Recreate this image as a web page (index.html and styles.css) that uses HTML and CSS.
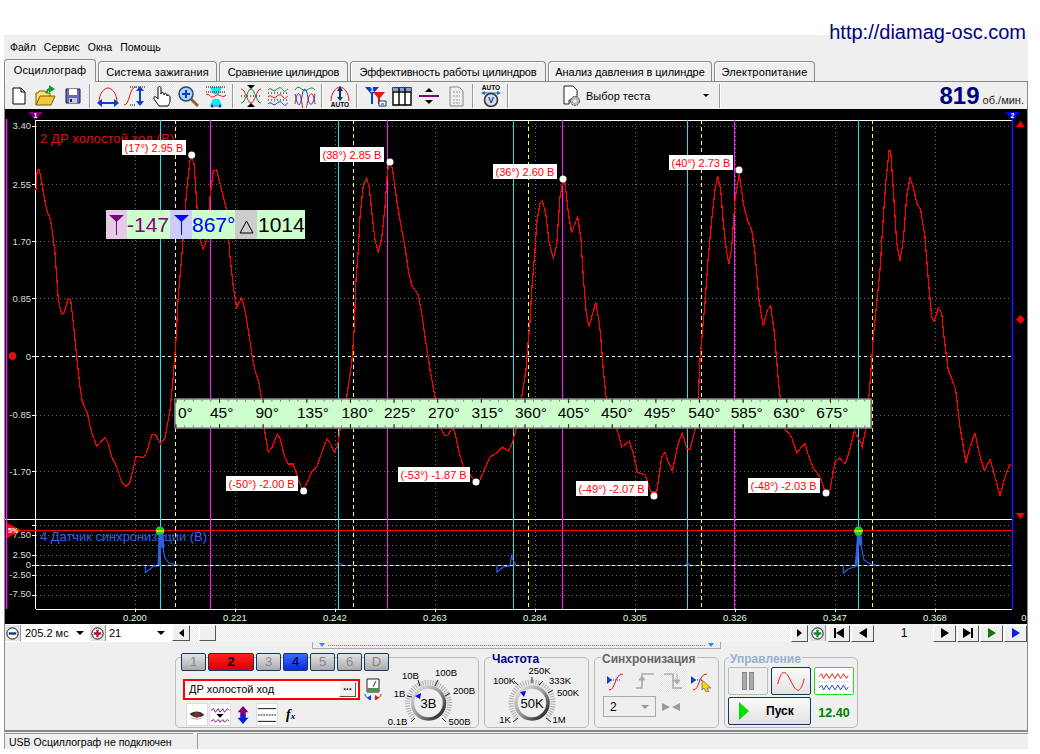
FILE: index.html
```html
<!DOCTYPE html>
<html lang="ru">
<head>
  <meta charset="UTF-8">
  <title>Осциллограф</title>
  <link rel="stylesheet" href="styles.css">
</head>
<body>

  <div class="site-link">http://diamag-osc.com</div>

  <div class="app">

    <!-- меню -->
    <div class="menu">
      <span>Файл</span><span>Сервис</span><span>Окна</span><span>Помощь</span>
    </div>

    <!-- вкладки -->
    <div class="tabs">
      <div class="tab active">Осциллограф</div>
      <div class="tab">Система зажигания</div>
      <div class="tab">Сравнение цилиндров</div>
      <div class="tab">Эффективность работы цилиндров</div>
      <div class="tab">Анализ давления в цилиндре</div>
      <div class="tab">Электропитание</div>
    </div>

    <div class="work">

      <!-- панель инструментов -->
      <div class="toolbar">
        <div class="tool"><svg viewBox="0 0 26 24"><path d="M7 4h8l4 4v12H7z" fill="#fff" stroke="#000"/><path d="M15 4v4h4" fill="none" stroke="#000"/></svg></div>
        <div class="tool"><svg viewBox="0 0 26 24"><path d="M3 21V9h2l1-2h6l1 2h4v3" fill="#ffe27a" stroke="#7a5a00"/><path d="M3 21l4-9h15l-4 9z" fill="#f5c542" stroke="#7a5a00"/><path d="M16 1l6 4-6 4z" fill="#0b9e2f"/><path d="M14 9c0-3 1-4 3-4" fill="none" stroke="#0b9e2f" stroke-width="2"/></svg></div>
        <div class="tool"><svg viewBox="0 0 26 24"><path d="M6 5h14v14H6z" fill="#6a6ab0" stroke="#1a1a50"/><path d="M9 5h8v6H9z" fill="#fff"/><path d="M9 14h8v5H9z" fill="#c8c8d8"/><path d="M10 15h2v3h-2z" fill="#1a1a50"/></svg></div>
        <div class="tool-sep"></div>
        <div class="tool"><svg viewBox="0 0 26 24"><path d="M4 18C4 10 9 4 13 4s9 6 9 14" fill="none" stroke="#e11"/><path d="M4 19h18" stroke="#0a3fd0" stroke-width="2"/><path d="M2 19l5-4v8zM24 19l-5-4v8z" fill="#0a3fd0"/></svg></div>
        <div class="tool"><svg viewBox="0 0 26 24"><path d="M8 3h16M8 21h6" stroke="#000" stroke-dasharray="1 1"/><path d="M2 21c6 0 5-18 12-18" fill="none" stroke="#e11"/><path d="M18 6v12" stroke="#0a3fd0" stroke-width="2"/><path d="M18 2l4 5h-8zM18 22l4-5h-8z" fill="#0a3fd0"/></svg></div>
        <div class="tool pressed"><svg viewBox="0 0 26 24"><path d="M10 22l-5-7c-1-2 1-3 2-2l2 2V4c0-2 3-2 3 0v6c0-2 3-2 3 0v1c0-2 3-2 3 0v1c0-2 3-1 3 1v4c0 2-1 3-2 5z" fill="#fff" stroke="#000"/></svg></div>
        <div class="tool"><svg viewBox="0 0 26 24"><path d="M15 15l7 7" stroke="#8a6a30" stroke-width="3"/><circle cx="10" cy="10" r="7" fill="#a8d4ff" stroke="#33466a" stroke-width="1.5"/><path d="M6 10h8M10 6v8" stroke="#0a3fd0" stroke-width="2"/></svg></div>
        <div class="tool"><svg viewBox="0 0 26 24"><path d="M7 3h12l-3 7H10zM10 15h6l3 6H7z" fill="#19e6e6"/><path d="M3 3h20M3 8h20" stroke="#000" stroke-dasharray="1 1"/><path d="M3 11c3-3 4 3 7 2s3-3 6-2 4 3 7 0" fill="none" stroke="#e11"/><path d="M8 22h10" stroke="#0a3fd0"/><path d="M7 22l3-2v4zM19 22l-3-2v4z" fill="#0a3fd0"/></svg></div>
        <div class="tool-sep"></div>
        <div class="tool"><svg viewBox="0 0 26 24"><path d="M3 5c5 0 6 14 10 14s5-14 10-14" fill="none" stroke="#e11"/><path d="M3 19c5 0 6-14 10-14s5 14 10 14" fill="none" stroke="#0a8a2a"/><path d="M3 12h20" stroke="#000" stroke-dasharray="1 2"/><path d="M9 1h8l-4 4zM9 23h8l-4-4z" fill="#000"/></svg></div>
        <div class="tool pressed"><svg viewBox="0 0 26 24"><path d="M3 6c3-4 5 3 8 0s5-3 7 0 3 0 5-1" fill="none" stroke="#0a8a2a"/><path d="M3 13c3-4 5 3 8 0s5-3 7 0 3 0 5-1" fill="none" stroke="#e11"/><path d="M3 20c3-4 5 3 8 0s5-3 7 0 3 0 5-1" fill="none" stroke="#0a3fd0"/><path d="M3 9h20M3 16h20" stroke="#000" stroke-dasharray="1 2"/></svg></div>
        <div class="tool"><svg viewBox="0 0 26 24"><path d="M3 6c3-5 5-2 8 0s6-2 8-2 3 1 4 2" fill="none" stroke="#0a8a2a"/><path d="M3 20c2-14 5-14 7 0s5 2 6-4 5-12 7 4" fill="none" stroke="#e11"/><path d="M3 10c3 14 5 14 7 2s5-6 6 2 5 10 7-4" fill="none" stroke="#0a3fd0"/></svg></div>
        <div class="tool-sep"></div>
        <div class="tool"><svg viewBox="0 0 26 24"><path d="M4 17C4 9 9 3 13 3s9 6 9 14" fill="none" stroke="#e11"/><path d="M13 6v9" stroke="#12307a" stroke-width="2"/><path d="M13 2l3 5h-6zM13 17l3-4h-6z" fill="#12307a"/><text class="tool-auto" x="13" y="23">AUTO</text></svg></div>
        <div class="tool-sep"></div>
        <div class="tool"><svg viewBox="0 0 26 24"><path d="M3 3h14l-6 7v10h-2V10z" fill="#0a3fd0"/><path d="M11 8h12l-5 6v6h-2v-6z" fill="#e11"/><text class="tool-num" x="10" y="8">1</text><path d="M17 17h7v5h-7z" fill="#fff" stroke="#12307a"/><path d="M19 20h3" stroke="#12307a"/></svg></div>
        <div class="tool pressed"><svg viewBox="0 0 26 24"><path d="M4 4h18v17H4z" fill="#fff" stroke="#000" stroke-width="1.4"/><path d="M4 4h18v3H4z" fill="#7f9fd8"/><path d="M4 8h18M10 4v17M16 4v17" stroke="#000" stroke-width="1.4"/></svg></div>
        <div class="tool"><svg viewBox="0 0 26 24"><path d="M3 12h20" stroke="#800080" stroke-width="2"/><path d="M13 4l4 4H9zM13 20l4-4H9z" fill="#000"/></svg></div>
        <div class="tool"><svg viewBox="0 0 26 24"><path d="M7 3h9l4 4v15H7z" fill="#eee" stroke="#888"/><path d="M10 8h7M10 12h7M10 16h7M10 19h7" stroke="#999" stroke-dasharray="2 1"/></svg></div>
        <div class="tool-sep"></div>
        <div class="tool"><svg viewBox="0 0 26 24"><text class="tool-auto" x="13" y="6">AUTO</text><path d="M5 9h16" stroke="#0a6fd0"/><path d="M3 9l4-2v4zM23 9l-4-2v4z" fill="#0a6fd0"/><circle cx="13" cy="16" r="6.5" fill="#ddd" stroke="#333" stroke-width="1.6"/><text class="tool-v" x="13" y="19">V</text></svg></div>
        <div class="tool-sep"></div>

        <div class="test-select">
          <svg class="test-icon" viewBox="0 0 22 24"><path d="M3 2h9l4 4v10H8v4H3z" fill="#fff" stroke="#222"/><circle cx="14" cy="17" r="4.5" fill="#bbb" stroke="#333" stroke-dasharray="2 1"/><circle cx="14" cy="17" r="1.6" fill="#fff"/></svg>
          <span>Выбор теста</span>
          <i class="caret small"></i>
        </div>
        <div class="tool-sep"></div>

        <div class="rpm"><b>819</b> об./мин.</div>
      </div>

      <!-- экран осциллографа -->
      <svg class="scope" viewBox="5 109 1022 515" width="1022" height="515">
        <rect x="5" y="109" width="1022" height="515" fill="#000"/>

        <path class="grid" d="M36 126.5H1012M36 184.5H1012M36 241.5H1012M36 298.5H1012M36 415.5H1012M36 471.5H1012M36 525.5H1012M36 535.5H1012M36 545.5H1012M36 555.5H1012M36 575.5H1012M36 585.5H1012M36 595.5H1012"/>
        <path class="grid" d="M135.5 120V609M235.5 120V609M335.5 120V609M435.5 120V609M535.5 120V609M635.5 120V609M735.5 120V609M835.5 120V609M935.5 120V609"/>

        <!-- оси -->
        <path class="axis" d="M35.5 120V609M35.5 120.5H1012M5 519.5H1012M35.5 609.5H1012"/>
        <path class="axis" d="M32 126.5h3M32 184.5h3M32 241.5h3M32 298.5h3M32 356.5h3M32 415.5h3M32 471.5h3M32 525.5h3M32 535.5h3M32 555.5h3M32 565.5h3M32 575.5h3M32 595.5h3M135.5 609v3M235.5 609v3M335.5 609v3M435.5 609v3M535.5 609v3M635.5 609v3M735.5 609v3M835.5 609v3M935.5 609v3"/>
        <path class="zero" d="M36 356.5H1012"/>

        <!-- курсоры -->
        <path class="line-cyan" d="M160.5 120V609M338.5 120V609M513.5 120V609M687.5 120V609M858.5 120V609"/>
        <path class="line-yellow" d="M175.5 120V609M353.5 120V609M528.5 120V609M701.5 120V609M872.5 120V609"/>
        <path class="line-magenta" d="M210.5 120V609M387.5 120V609M562.5 120V609M734.5 120V609"/>
        <path class="line-left" d="M6.5 119V609"/>
        <path class="line-right" d="M1012.5 112V609"/>

        <polyline class="wave" points="36,190 37,172 39,169 41,178 43,190 46.7,210 50,218 51.7,227 55,253 58.3,300 61.7,314 64,312.7 68.3,298.7 70.7,300 73.3,323 75,340 76.7,357 80,387 82.3,402 87.3,413 91.7,433 96.7,446 100,443 105,437 108,443 111.7,457 116.7,467 121.7,482 126,487 130,482 135.7,458 138,456 143,458 146.7,453 151.7,435 155,434 160.7,444 165,438 170,410 173,380 176,340 178,300 181.7,257 186.7,190 190,160 191.7,158 194,163 196.7,203 200,240 203.3,249 206.7,240 210,197 213.3,171 216.7,170 221.7,190 226.7,210 230,257 233.3,287 236.7,307 241.7,298 245,310 248.3,330 252.3,357 255,370 259,383 261.7,400 265,433 268.3,452 271.7,448 277.3,434 280,438 285,458 288.3,464 293.3,464 298.3,480 303.3,491 311.7,472 316.7,467 321.7,453 326.7,439 330,443 334.3,452 337.3,447 340,430 346.7,397 351.7,363 352.7,352 354.3,327 356,280 358.3,250 360,217 363.3,185 366.7,178 369.3,188 372.3,217 375,240 378.3,253 381.7,238 385,207 387.3,173 389.3,163 392.3,168 396.7,200 401.7,230 405,247 408.3,270 411.7,285 418.3,295 421.7,313 425,337 428.3,358 430,370 435,397 440,427 445,436 448,435 452.7,427 455,433 459.3,453 463.3,467 468.3,472 475,482 480,480 490,457 496.7,453 502.3,447 508.3,451 511.7,445 516.7,427 521.7,397 526,370 528.3,340 530,322 531.7,290 535,250 536.7,223 540,203 542.3,201 545.7,213 549,242 553.3,258 556.7,245 560,197 562.7,182 565,183 568.3,213 571.7,233 574.3,225 577.7,217 581,240 583.3,277 586,310 588.7,327 591.7,317 595.7,302 599.3,323 601,340 603.3,370 606,397 616.7,428 621.7,447 629.3,441 633.3,453 637.3,472 645,475 651,492 656.7,492 661.7,457 665,452 668.3,462 672.3,471 678.3,443 682.3,433 686.7,448 690,450 695,430 698.3,397 700,360 701.7,340 705,303 708.3,257 711.7,220 715,190 717.7,176 720.7,190 723.3,223 726.7,253 729,264 731.7,247 735,200 739.3,174 743.3,203 746.7,218 751.7,230 755,253 759,300 763.3,326 767.3,310 770.7,306 774,330 775,340 778.3,380 783.3,427 791.7,437 796.7,453 805,443 808.3,455 813.3,468 820,477 825.7,493 830,490 835,462 839.3,458 845,464 848.3,455 854.3,431 858.3,438 862.3,447 866.7,423 870,383 871,370 873.3,337 876.7,303 880,270 883.3,217 886,180 889,151 890.7,151 893.3,190 896.7,243 900,261 903.3,240 906.7,197 910,177 913.3,187 916.7,203 920.7,210 925,237 928.3,280 931.7,317 934,322 938.3,308 941.7,313 944.3,340 948.3,370 952.3,380 955.7,390 960,427 966,463 970,447 975,433 979.3,453 984.3,471 990,459 995,477 1000,496 1005,477 1010,464 1012,466"/>

        <!-- канал 4 -->
        <path class="sync" d="M36 565.5H1012"/>
        <polyline class="sync" points="145.3,565 145.3,572.5 150,569 153,566.5 159,566"/>
        <polyline class="sync spike" points="159,566 159.5,550 160,535 162,535 163,548"/>
        <polyline class="sync" points="163,548 165,558 169,563 175,564.7 179,565"/>
        <polyline class="sync" points="338,565 339,563 341,564 343,566"/>
        <polyline class="sync" points="497,565 497,572 503,567 510,566 511.5,556 513,560 516,565 520,566"/>
        <polyline class="sync" points="686,565 687,563 689,564 691,566"/>
        <polyline class="sync" points="843.3,565 843.3,573 848,569 856,566.5"/>
        <polyline class="sync spike" points="856,566.5 857.5,550 858.5,535 860,535 861,545"/>
        <polyline class="sync" points="861,545 864,560 870,564 876,565"/>
        <path class="zero" d="M36 565.5H1012"/>

        <path class="trig" d="M8 530.5H1012"/>
        <circle cx="160" cy="531" r="4.5" fill="#19d219"/>
        <circle cx="858.5" cy="531" r="4.5" fill="#19d219"/>
        <path class="trig-mid" d="M156 531h8M854.5 531h8"/>

        <!-- подписи каналов -->
        <text class="title-red" x="40" y="143" textLength="134">2 ДР холостой ход (В)</text>
        <text class="title-blue" x="40" y="541" textLength="167">4 Датчик синхронизации (В)</text>

        <!-- шкала напряжения -->
        <g class="ax-y">
          <text x="31" y="129">3.40</text>
          <text x="31" y="188">2.55</text>
          <text x="31" y="245">1.70</text>
          <text x="31" y="302">0.85</text>
          <text x="31" y="360">0</text>
          <text x="31" y="418">-0.85</text>
          <text x="31" y="475">-1.70</text>
          <text x="31" y="538">7.50</text>
          <text x="31" y="558">2.50</text>
          <text x="31" y="568">0</text>
          <text x="31" y="578">-2.50</text>
          <text x="31" y="597">-7.50</text>
        </g>

        <!-- шкала времени -->
        <g class="ax-x">
          <text x="135" y="621">0.200</text>
          <text x="235" y="621">0.221</text>
          <text x="335" y="621">0.242</text>
          <text x="435" y="621">0.263</text>
          <text x="535" y="621">0.284</text>
          <text x="635" y="621">0.305</text>
          <text x="735" y="621">0.326</text>
          <text x="835" y="621">0.347</text>
          <text x="935" y="621">0.368</text>
          <text x="1024" y="621">0</text>
        </g>

        <!-- маркеры -->
        <path d="M28 112h15l-7.5 8z" fill="#800080"/>
        <text class="mark" x="35.5" y="117.5">1</text>
        <path d="M1005 112h15l-7.5 8z" fill="#00f"/>
        <text class="mark" x="1012.5" y="117.5">2</text>
        <path d="M1016 127h9l-4.5-6z" fill="#f00"/>
        <path d="M1016 513h9l-4.5 6z" fill="#f00"/>
        <path d="M1020.5 315l4.5 4.5-4.5 4.5-4.5-4.5z" fill="#f00"/>
        <circle cx="12.5" cy="356" r="3.5" fill="#f00" stroke="#a33"/>
        <path d="M7 523l15 7.5-15 7.5z" fill="#f00"/>
        <text class="mark-left" x="8" y="533">5%</text>

        <!-- подписи экстремумов -->
        <g class="note">
          <rect x="122" y="140" width="64" height="15"/><text x="124.5" y="151.5">(17°) 2.95 В</text>
          <rect x="320" y="147" width="64" height="15"/><text x="322.5" y="158.5">(38°) 2.85 В</text>
          <rect x="493" y="164" width="64" height="15"/><text x="495.5" y="175.5">(36°) 2.60 В</text>
          <rect x="669" y="155" width="64" height="15"/><text x="671.5" y="166.5">(40°) 2.73 В</text>
          <rect x="226" y="476" width="72" height="15"/><text x="228.5" y="487.5">(-50°) -2.00 В</text>
          <rect x="398" y="467" width="72" height="15"/><text x="400.5" y="478.5">(-53°) -1.87 В</text>
          <rect x="576" y="481" width="72" height="15"/><text x="578.5" y="492.5">(-49°) -2.07 В</text>
          <rect x="748" y="478" width="72" height="15"/><text x="750.5" y="489.5">(-48°) -2.03 В</text>
        </g>
        <g fill="#fff">
          <circle cx="191.7" cy="155" r="3.5"/>
          <circle cx="390" cy="162" r="3.5"/>
          <circle cx="563" cy="179" r="3.5"/>
          <circle cx="739" cy="170" r="3.5"/>
          <circle cx="303.7" cy="491" r="3.5"/>
          <circle cx="476" cy="482" r="3.5"/>
          <circle cx="654" cy="496" r="3.5"/>
          <circle cx="826" cy="493" r="3.5"/>
        </g>

        <!-- значения курсоров -->
        <rect x="106" y="210" width="199" height="29" fill="#ccffcc"/>
        <rect x="106" y="210" width="21" height="29" fill="#e4cce4"/>
        <rect x="170" y="210" width="22" height="29" fill="#ccccff"/>
        <rect x="235" y="210" width="22" height="29" fill="#cccccc"/>
        <path d="M109 215h15l-7.5 7z" fill="#800080"/><path d="M116.5 220v15" stroke="#800080"/>
        <path d="M174 215h15l-7.5 7z" fill="#00f"/><path d="M181.5 220v15" stroke="#00f"/>
        <path d="M240 233h13l-6.5-12z" fill="none" stroke="#000"/>
        <text class="cur cur-p" x="127" y="232">-147</text>
        <text class="cur cur-b" x="192" y="232">867°</text>
        <text class="cur" x="258" y="232">1014</text>

        <!-- шкала градусов -->
        <rect class="ruler" x="175" y="399" width="696" height="29"/>
        <path class="ruler-minor" d="M175.4 400.5H870M175.4 426.5H870"/>
        <path class="ruler-major" d="M175.4 401H870M175.4 426H870"/>
        <g class="deg">
          <text x="178" y="418">0°</text>
          <text x="210" y="418">45°</text>
          <text x="255.5" y="418">90°</text>
          <text x="297" y="418">135°</text>
          <text x="341.5" y="418">180°</text>
          <text x="384" y="418">225°</text>
          <text x="428" y="418">270°</text>
          <text x="471.5" y="418">315°</text>
          <text x="515" y="418">360°</text>
          <text x="557.7" y="418">405°</text>
          <text x="601" y="418">450°</text>
          <text x="644" y="418">495°</text>
          <text x="688.3" y="418">540°</text>
          <text x="730.7" y="418">585°</text>
          <text x="773.3" y="418">630°</text>
          <text x="816.3" y="418">675°</text>
        </g>
      </svg>

      <!-- развертка и прокрутка -->
      <div class="strip">
        <div class="span-box">
          <div class="round-btn"><svg viewBox="0 0 16 16"><circle cx="8" cy="8" r="6" fill="#fff" stroke="#000"/><path d="M4 8h8" stroke="#12307a" stroke-width="2.5"/></svg></div>
          <span class="span-val">205.2 мс</span>
          <i class="caret"></i>
          <div class="round-btn"><svg viewBox="0 0 16 16"><circle cx="8" cy="8" r="6" fill="#fff" stroke="#000"/><path d="M4 8h8M8 4v8" stroke="#b01030" stroke-width="2.5"/></svg></div>
          <span class="span-num">21</span>
          <i class="caret"></i>
        </div>
        <button class="bevel step-l"><i class="tri-l"></i></button>
        <div class="thumb bevel"></div>
        <div class="track"></div>
        <button class="bevel nav-s"><i class="tri-r"></i></button>
        <div class="round-btn nav-plus"><svg viewBox="0 0 16 16"><circle cx="8" cy="8" r="6" fill="#fff" stroke="#000"/><path d="M4 8h8M8 4v8" stroke="#0a8a2a" stroke-width="2.5"/></svg></div>
        <button class="bevel nav-b"><i class="bar-l"></i><i class="tri-l"></i></button>
        <button class="bevel nav-b wide"><i class="tri-l"></i></button>
        <div class="page-num">1</div>
        <button class="bevel nav-b wide"><i class="tri-r"></i></button>
        <button class="bevel nav-b"><i class="tri-r"></i><i class="bar-r"></i></button>
        <button class="bevel nav-b wide green"><i class="tri-r"></i></button>
        <button class="bevel nav-b wide blue"><i class="tri-r"></i></button>
      </div>

      <div class="collapse"><i class="mini-down"></i><span></span><i class="mini-down"></i></div>

      <!-- нижняя панель -->
      <div class="panel">

        <div class="group group-ch">
          <div class="ch-col">
            <div class="ch-row">
              <div class="ch">1</div>
              <div class="ch ch-red">2</div>
              <div class="ch">3</div>
              <div class="ch ch-blue">4</div>
              <div class="ch">5</div>
              <div class="ch">6</div>
              <div class="ch">D</div>
            </div>
            <div class="name-row">
              <div class="name-box">
                <span>ДР холостой ход</span>
                <button class="bevel dots">...</button>
              </div>
              <svg class="meter" viewBox="0 0 20 22"><path d="M4 1h12v13H4z" fill="#fff" stroke="#222"/><path d="M4 10h12v4H4z" fill="#5a8a5a"/><path d="M10 9l3-6" stroke="#333"/><path d="M2 16c0 3 2 4 6 4" fill="none" stroke="#0a3fd0"/><path d="M18 16c0 3-2 4-6 4" fill="none" stroke="#e11"/><path d="M8 17v6l-4-3z" fill="#0a3fd0"/><path d="M12 17v6l4-3z" fill="#e11"/></svg>
            </div>
            <div class="tool-row">
              <div class="mini"><svg viewBox="0 0 22 22"><path d="M3 10c4-4 12-4 16 1-4 3-12 4-16-1z" fill="#333"/><circle cx="11" cy="11" r="3" fill="#8a2a2a"/><path d="M4 14c4 2 10 2 13 0" fill="none" stroke="#aaa"/></svg></div>
              <div class="mini"><svg viewBox="0 0 22 22"><path d="M1 6l3-2 2 4 3-4 2 4 3-4 2 4 3-4 2 2M1 18l3-2 2 3 3-3 2 3 3-3 2 3 3-3 2 2" fill="none" stroke="#800080"/><path d="M7 10h8l-4 4z" fill="#000"/></svg></div>
              <div class="mini plain"><svg viewBox="0 0 22 22"><path d="M11 1l6 7h-3v4H8V8H5z" fill="#800080"/><path d="M11 21l6-7h-3v-3H8v3H5z" fill="#0a1fe0"/></svg></div>
              <div class="mini"><svg viewBox="0 0 22 22"><path d="M1 4h20M1 18h20" stroke="#000"/><path d="M1 11h20" stroke="#000" stroke-dasharray="2 1"/></svg></div>
              <span class="fx">f<small>x</small></span>
            </div>
          </div>
          <svg class="dial" viewBox="0 0 90 69" width="90" height="69">
            <defs>
              <linearGradient id="ring" x1="0" y1="0" x2="1" y2="1">
                <stop offset="0" stop-color="#e8e8e8"/>
                <stop offset=".5" stop-color="#999"/>
                <stop offset="1" stop-color="#111"/>
              </linearGradient>
            </defs>
            <path class="dial-ticks" d="M27.2 59.8A21 21 0 1 1 57.8 59.8"/>
            <circle cx="42.5" cy="45" r="16" fill="#efefef" stroke="url(#ring)" stroke-width="3.5"/>
            <path class="dial-major" d="M29 60l-4 4M56 60l4 4M26 39l-5-1M59 38l5-3M34 28l-2-6M49 28l3-6"/>
            <path d="M35 35l-6 3 5 3z" fill="#00f"/>
            <text class="dial-val" x="42.5" y="50">3В</text>
            <g class="dial-txt">
              <text x="24.5" y="20.5">10В</text>
              <text x="60" y="17.5">100В</text>
              <text x="13.5" y="38.5">1В</text>
              <text x="78" y="35.5">200В</text>
              <text x="11.5" y="66.5">0.1В</text>
              <text x="73.5" y="66.5">500В</text>
            </g>
          </svg>
        </div>

        <div class="group group-freq">
          <div class="group-title t-navy">Частота</div>
          <svg class="dial" viewBox="0 0 103 69" width="103" height="69">
            <path class="dial-ticks" d="M32.1 59.8A21 21 0 1 1 61.9 59.8"/>
            <circle cx="47" cy="45" r="16" fill="#efefef" stroke="url(#ring)" stroke-width="3.5"/>
            <path class="dial-major" d="M33 60l-5 4M61 60l5 4M63 35l5-3M54 27l4-4M47 25v-6M33 27l-4-4"/>
            <path d="M41 33l-6 1 4 5z" fill="#00f"/>
            <text class="dial-val" x="47" y="50">50K</text>
            <g class="dial-txt">
              <text x="54.5" y="16">250K</text>
              <text x="19" y="26">100K</text>
              <text x="75" y="26">333K</text>
              <text x="83" y="38">500K</text>
              <text x="20" y="65">1K</text>
              <text x="74" y="65">1M</text>
            </g>
          </svg>
        </div>

        <div class="group group-sync">
          <div class="group-title t-gray">Синхронизация</div>
          <div class="sync-icons">
            <div class="s-btn"><svg viewBox="0 0 24 22"><path d="M4 20c7 0 5-16 14-16" fill="none" stroke="#e11"/><path d="M4 10h12" stroke="#0a3fd0" stroke-dasharray="1 1"/><path d="M2 6l5 4-5 4z" fill="#0a3fd0"/></svg></div>
            <div class="s-btn"><svg viewBox="0 0 24 22"><path d="M3 18h6V4h12" fill="none" stroke="#aaa" stroke-width="1.5"/><path d="M9 6l3 4H6zM9 10v7" stroke="#aaa" fill="#aaa"/></svg></div>
            <div class="s-btn pressed"><svg viewBox="0 0 24 22"><path d="M3 4h9v14h9" fill="none" stroke="#aaa" stroke-width="1.5"/><path d="M16 14l3-4h-6zM16 4v7" stroke="#aaa" fill="#aaa"/></svg></div>
            <div class="s-btn"><svg viewBox="0 0 24 22"><path d="M4 20c7 0 5-16 14-16" fill="none" stroke="#e11"/><path d="M4 10h10" stroke="#0a3fd0" stroke-dasharray="1 1"/><path d="M2 6l5 4-5 4z" fill="#0a3fd0"/><path d="M13 10l9 8-4 0 2 4-3 0-2-4-2 2z" fill="#ffdc00" stroke="#444" stroke-width=".6"/></svg></div>
          </div>
          <div class="sync-row">
            <div class="sync-combo"><span>2</span><i class="caret gray"></i></div>
            <svg class="sync-arrows" viewBox="0 0 20 10"><path d="M1 1l8 4-8 4zM19 1l-8 4 8 4z" fill="#999"/></svg>
          </div>
        </div>

        <div class="group group-ctl">
          <div class="group-title t-blue">Управление</div>
          <div class="ctl-grid">
            <div class="ctl pause"><i></i><i></i></div>
            <div class="ctl on"><svg viewBox="0 0 40 28"><path d="M6 17C10 1 14 1 20 14s10 13 14 -3" fill="none" stroke="#e11"/></svg></div>
            <div class="ctl live"><svg viewBox="0 0 40 28"><path d="M4 9l3-3 2 5 3-5 3 5 3-5 3 5 3-5 3 5 3-5 3 5 2-3" fill="none" stroke="#e11"/><path d="M4 21l3-3 2 5 3-5 3 5 3-5 3 5 3-5 3 5 3-5 3 5 2-3" fill="none" stroke="#0a3fd0"/><path d="M4 14.5h32" stroke="#999" stroke-dasharray="1 2"/></svg></div>
            <div class="ctl on start"><svg viewBox="0 0 12 18" width="12" height="18"><path d="M1 0l10 9-10 9z" fill="#00e000"/></svg><b>Пуск</b></div>
            <div class="volt">12.40</div>
          </div>
        </div>

      </div>
    </div>

    <!-- строка состояния -->
    <div class="status">
      <div class="status-left">USB Осциллограф не подключен</div>
      <div class="status-right"></div>
    </div>
  </div>

</body>
</html>
```

FILE: styles.css
```css
*{
  box-sizing: border-box;
}

body{
  margin: 0;
  background: #fff;
  font-family: "Liberation Sans", Arial, sans-serif;
  color: #000;
  height: 754px;
  overflow: hidden;
}

button{
  font-family: inherit;
  padding: 0;
}

.site-link{
  height: 35px;
  padding: 22px 14px 0 0;
  text-align: right;
  font-size: 20px;
  line-height: 20px;
  color: #000080;
}

.app{
  margin-left: 4px;
  width: 1024px;
  height: 714px;
  background: #efefef;
}

/* меню */
.menu{
  height: 24px;
  display: flex;
  align-items: center;
  padding-left: 6px;
  font-size: 10.5px;
}

.menu span{
  margin-right: 8px;
}

/* вкладки */
.tabs{
  height: 22px;
  display: flex;
  align-items: flex-end;
  gap: 2px;
}

.tab{
  width: 119px;
  height: 20px;
  border: 1px solid #888;
  border-bottom: 0;
  border-radius: 4px 4px 0 0;
  font-size: 11px;
  line-height: 20px;
  letter-spacing: .15px;
  text-align: center;
  white-space: nowrap;
  box-shadow: inset 1px 1px 0 #fff;
}

.tab:nth-child(3){
  width: 129px;
  letter-spacing: -.2px;
}

.tab:nth-child(4){
  width: 196px;
  letter-spacing: -.15px;
}

.tab:nth-child(5){
  width: 164px;
  letter-spacing: -.05px;
}

.tab:nth-child(6){
  width: 101px;
}

.tab.active{
  width: 92px;
  height: 23px;
  margin-bottom: -1px;
  position: relative;
  background: #efefef;
  line-height: 20px;
  z-index: 1;
}

.work{
  border: 1px solid #888;
  border-bottom-width: 2px;
  height: 651px;
  background: #efefef;
}

/* панель инструментов */
.toolbar{
  height: 27px;
  display: flex;
  align-items: center;
}

.tool{
  width: 27px;
  height: 25px;
  display: flex;
  align-items: center;
  justify-content: center;
}

.tool svg{
  width: 26px;
  height: 24px;
  display: block;
}

.tool.pressed,
.s-btn.pressed{
  background: repeating-conic-gradient(#fff 0 25%, #dedede 0 50%) 0 0 / 2px 2px;
}

.tool-sep{
  width: 2px;
  height: 24px;
  margin: 0 3px;
  border-left: 1px solid #999;
  border-right: 1px solid #fff;
}

.tool-auto{
  font-size: 6.5px;
  font-weight: bold;
  text-anchor: middle;
  fill: #000;
}

.tool-num{
  font-size: 7px;
  font-weight: bold;
  text-anchor: middle;
  fill: #fff;
}

.tool-v{
  font-size: 9px;
  font-weight: bold;
  text-anchor: middle;
  fill: #0a3fd0;
}

.test-select{
  width: 204px;
  display: flex;
  align-items: center;
  padding-left: 49px;
  font-size: 11px;
}

.test-icon{
  width: 22px;
  height: 24px;
  margin-right: 3px;
}

.test-select span{
  flex: 1;
}

.test-select .caret{
  margin-right: 7px;
}

.caret{
  display: inline-block;
  width: 0;
  height: 0;
  border-top: 4px solid #000;
  border-left: 4px solid transparent;
  border-right: 4px solid transparent;
}

.caret.small{
  border-top-width: 3px;
  border-left-width: 3px;
  border-right-width: 3px;
}

.caret.gray{
  border-top-color: #999;
}

.rpm{
  margin-left: auto;
  padding-right: 3px;
  font-size: 11px;
  color: #222;
  white-space: nowrap;
}

.rpm b{
  font-size: 24px;
  color: #000080;
}

/* экран */
.scope{
  display: block;
}

.scope text{
  font-family: "Liberation Sans", Arial, sans-serif;
}

.grid{
  fill: none;
  stroke: #6a6a6a;
  stroke-dasharray: 1 3;
}

.axis{
  fill: none;
  stroke: #fff;
  shape-rendering: crispEdges;
}

.zero{
  fill: none;
  stroke: #fff;
  stroke-dasharray: 3 3;
  shape-rendering: crispEdges;
}

.line-cyan{
  stroke: #19e6e6;
  shape-rendering: crispEdges;
}

.line-yellow{
  stroke: #ffff33;
  stroke-dasharray: 4 3;
  shape-rendering: crispEdges;
}

.line-magenta{
  stroke: #ff19ff;
  shape-rendering: crispEdges;
}

.line-left{
  stroke: #ff19ff;
  stroke-width: 1.5;
}

.line-right{
  stroke: #1a1aff;
  stroke-width: 1.5;
}

.wave{
  fill: none;
  stroke: #f00;
  stroke-width: 1.2;
  shape-rendering: crispEdges;
}

.sync{
  fill: none;
  stroke: #2f62e8;
  stroke-width: 1.2;
}

.sync.spike{
  stroke-width: 3;
}

.trig{
  stroke: #f00;
  stroke-width: 1.5;
  shape-rendering: crispEdges;
}

.trig-mid{
  stroke: #ffe100;
  stroke-width: 1.5;
}

.title-red,
.title-blue{
  font-size: 13px;
}

.title-red{
  fill: #e01010;
}

.title-blue{
  fill: #2f62e8;
}

.ax-y text{
  font-size: 9.5px;
  fill: #ddd;
  text-anchor: end;
}

.ax-x text{
  font-size: 9.5px;
  fill: #dfd;
  text-anchor: middle;
}

.mark{
  font-size: 7px;
  font-weight: bold;
  fill: #fff;
  text-anchor: middle;
}

.mark-left{
  font-size: 7px;
  font-weight: bold;
  fill: #fff;
}

.note rect{
  fill: #fff;
}

.note text{
  font-size: 11px;
  fill: #f00;
}

.cur{
  font-size: 21px;
  fill: #000;
}

.cur-p{
  fill: #800080;
}

.cur-b{
  fill: #00f;
}

.ruler{
  fill: #ccffcc;
  stroke: #888;
  stroke-width: 1.5;
}

.ruler-minor{
  fill: none;
  stroke: #777;
  stroke-width: 2;
  stroke-dasharray: 1 7.72;
}

.ruler-major{
  fill: none;
  stroke: #222;
  stroke-width: 4;
  stroke-dasharray: 1 42.64;
}

.deg text{
  font-size: 15.5px;
  fill: #000;
}

/* развертка */
.strip{
  height: 18px;
  display: flex;
  align-items: center;
  background: repeating-conic-gradient(#fff 0 25%, #e8e8e8 0 50%) 0 0 / 2px 2px;
}

.span-box{
  width: 167px;
  height: 18px;
  display: flex;
  align-items: center;
  background: #fff;
  font-size: 11px;
}

.round-btn{
  width: 16px;
  height: 16px;
  flex: none;
  display: flex;
  align-items: center;
  justify-content: center;
  background: #e4e4e4;
  border-right: 1px solid #999;
}

.round-btn svg{
  width: 15px;
  height: 15px;
}

.span-val{
  width: 51px;
  margin-left: 4px;
}

.span-box .caret{
  margin-right: 6px;
}

.span-num{
  width: 48px;
  margin-left: 3px;
}

.bevel{
  background: #efefef;
  border: 1px solid;
  border-color: #fff #555 #555 #fff;
  display: flex;
  align-items: center;
  justify-content: center;
}

.step-l{
  width: 18px;
  height: 16px;
}

.thumb{
  width: 17px;
  height: 16px;
  margin-left: 9px;
}

.track{
  flex: 1;
}

.nav-s{
  width: 17px;
  height: 17px;
}

.nav-plus{
  margin: 0 2px;
}

.nav-b{
  width: 22px;
  height: 17px;
  margin-right: 1px;
  color: #000;
}

.nav-b.wide{
  width: 23px;
}

.nav-b.green{
  color: #0a7a0a;
}

.nav-b.blue{
  color: #0a1fe0;
  margin-right: 0;
}

.tri-l{
  border-right: 8px solid #000;
  border-top: 5px solid transparent;
  border-bottom: 5px solid transparent;
}

.tri-r{
  border-left: 8px solid currentColor;
  border-top: 5px solid transparent;
  border-bottom: 5px solid transparent;
}

.nav-s .tri-r{
  border-left-width: 5px;
  border-top-width: 4px;
  border-bottom-width: 4px;
}

.step-l .tri-l{
  border-right-width: 5px;
  border-top-width: 4px;
  border-bottom-width: 4px;
}

.bar-l,
.bar-r{
  width: 2px;
  height: 10px;
  background: #000;
}

.page-num{
  width: 58px;
  text-align: center;
  font-size: 12px;
  background: #efefef;
  line-height: 18px;
}

.collapse{
  width: 409px;
  height: 7px;
  margin-left: 307px;
  display: flex;
  align-items: center;
  gap: 3px;
  padding: 0 6px;
  border: 1px solid #aaa;
  border-top: 0;
}

.collapse span{
  flex: 1;
  border-top: 1px dotted #2a8cff;
}

.mini-down{
  border-top: 4px solid #2a8cff;
  border-left: 3px solid transparent;
  border-right: 3px solid transparent;
}

/* нижняя панель */
.panel{
  display: flex;
  gap: 5px;
  padding: 8px 0 0 170px;
}

.group{
  position: relative;
  height: 71px;
  border: 1px solid #bbb;
  border-radius: 5px;
}

.group-title{
  position: absolute;
  top: -6px;
  left: 6px;
  padding: 0 1px;
  background: #efefef;
  font-size: 12px;
  font-weight: bold;
  line-height: 14px;
}

.t-navy{
  color: #000080;
}

.t-gray{
  color: #666;
}

.t-blue{
  left: 4px;
  color: #98b0d0;
}

.group-ch{
  width: 304px;
  display: flex;
  padding-left: 5px;
}

.ch-col{
  width: 205px;
  margin-top: -5px;
}

.ch-row{
  display: flex;
  gap: 2px;
  width: 210px;
}

.ch{
  width: 25px;
  height: 18px;
  border: 1px solid #16365c;
  border-radius: 2px;
  background: linear-gradient(#e4e4e4, #aaa);
  color: #888;
  font-size: 13px;
  line-height: 16px;
  text-align: center;
}

.ch-red{
  width: 46px;
  background: linear-gradient(#ff2020, #d80000);
  color: #000;
  font-weight: bold;
}

.ch-blue{
  background: linear-gradient(#3a6aff, #0a2adf);
  color: #000;
}

.name-row{
  display: flex;
  align-items: center;
  margin: 7px 0 0 2px;
}

.name-box{
  width: 177px;
  height: 21px;
  display: flex;
  align-items: center;
  justify-content: space-between;
  padding: 0 2px 0 4px;
  border: 2px solid #f00;
  background: #fff;
  font-size: 11px;
}

.dots{
  width: 17px;
  height: 15px;
  font-weight: bold;
  font-size: 10px;
  line-height: 8px;
  align-items: flex-start;
}

.meter{
  width: 20px;
  height: 22px;
  margin-left: 3px;
}

.tool-row{
  display: flex;
  align-items: center;
  gap: 1px;
  margin: 3px 0 0 5px;
}

.mini{
  width: 22px;
  height: 23px;
  background: #fff;
  border: 1px solid #ddd;
  display: flex;
  align-items: center;
  justify-content: center;
}

.mini.plain{
  background: none;
  border: 0;
  margin: 0 1px 0 0;
}

.mini svg{
  width: 20px;
  height: 20px;
}

.fx{
  margin-left: 7px;
  font: italic bold 14px "Liberation Serif", serif;
}

.fx small{
  font-size: 9px;
}

.dial{
  display: block;
  flex: none;
}

.dial text{
  font-family: "Liberation Sans", Arial, sans-serif;
}

.dial-ticks{
  fill: none;
  stroke: #aaa;
  stroke-width: 5;
  stroke-dasharray: 1 1.5;
}

.dial-major{
  fill: none;
  stroke: #222;
}

.dial-val{
  font-size: 13px;
  text-anchor: middle;
}

.dial-txt text{
  font-size: 9.5px;
  text-anchor: middle;
}

.group-freq{
  width: 105px;
}

.group-sync{
  width: 125px;
  padding: 11px 0 0 8px;
}

.sync-icons{
  display: flex;
}

.s-btn{
  width: 28px;
  height: 22px;
  margin-top: 1px;
}

.s-btn svg{
  width: 24px;
  height: 22px;
  display: block;
  margin: 0 auto;
}

.sync-row{
  display: flex;
  align-items: center;
  margin-top: 4px;
}

.sync-combo{
  width: 53px;
  height: 21px;
  border: 1px solid #aaa;
  display: flex;
  align-items: center;
  justify-content: space-between;
  padding: 0 6px;
  font-size: 12px;
}

.sync-arrows{
  width: 20px;
  height: 10px;
  margin-left: 5px;
}

.group-ctl{
  width: 134px;
  padding: 9px 0 0 3px;
}

.ctl-grid{
  display: grid;
  grid-template-columns: 40px 40px 40px;
  grid-template-rows: 28px 28px;
  gap: 2px 3px;
}

.ctl{
  border: 1px solid #bbb;
  border-radius: 2px;
  display: flex;
  align-items: center;
  justify-content: center;
}

.ctl svg{
  display: block;
}

.ctl.on{
  border: 1px solid #16365c;
  background: linear-gradient(#fafafa, #e2e2e2);
}

.ctl.live{
  border: 1px solid #19e619;
  background: #fff;
}

.pause{
  gap: 2px;
}

.pause i{
  width: 5px;
  height: 18px;
  background: #aaa;
  border: 1px solid #888;
}

.start{
  grid-column: span 2;
  justify-content: flex-start;
  padding-left: 9px;
  font-size: 12px;
}

.start b{
  margin-left: 16px;
}

.volt{
  font-size: 12.5px;
  font-weight: bold;
  color: #007a00;
  text-align: center;
  line-height: 32px;
}

/* строка состояния */
.status{
  display: flex;
  margin-top: 1px;
  height: 16px;
  gap: 4px;
}

.status-left{
  width: 189px;
  font-size: 10.5px;
  line-height: 16px;
  padding-left: 4px;
  border-top: 1px solid #999;
  border-left: 1px solid #999;
  white-space: nowrap;
}

.status-right{
  flex: 1;
  border-top: 1px solid #999;
  border-left: 1px solid #999;
}
```
